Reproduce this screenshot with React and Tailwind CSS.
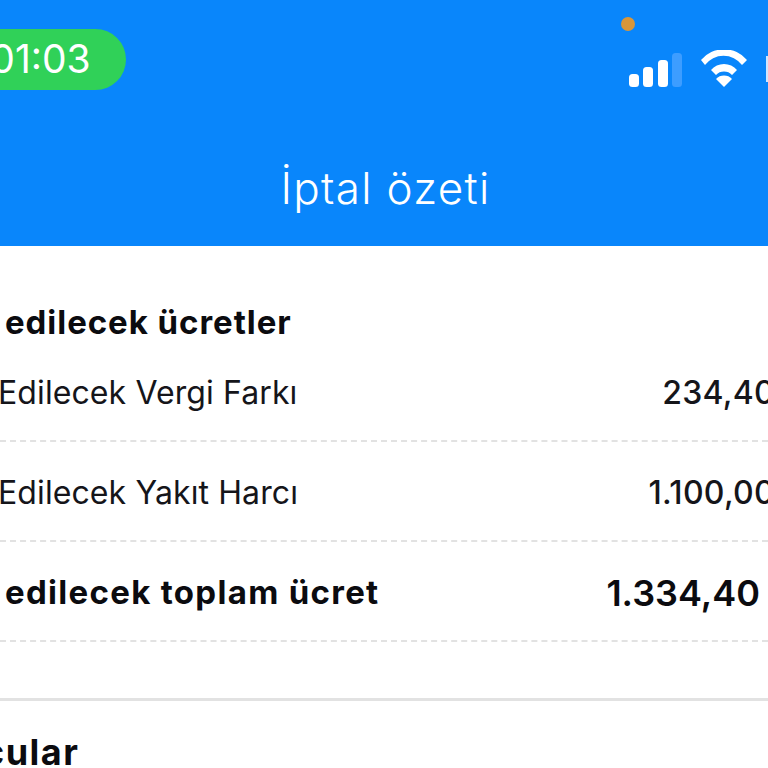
function StatusBar() {
  return (
    <div className="flex h-[124px] items-start justify-between">
      <div className="mt-[29px] -ml-[45px] flex h-[61px] w-[171px] items-center justify-center rounded-r-full bg-[#30d158] text-[39px] font-normal text-white font-['Inter',sans-serif]">
        01:03
      </div>
      <div className="relative h-[124px] w-[168px]">
        <div className="absolute top-[17px] left-[21px] h-[14px] w-[14px] rounded-full bg-[#d8963a]" />
        <svg className="absolute top-[50px] left-[29px]" width="126" height="40" viewBox="0 0 126 40" fill="#fff">
          <rect x="0" y="24" width="10" height="13" rx="3.5" />
          <rect x="14" y="17" width="10" height="20" rx="3.5" />
          <rect x="29" y="10" width="10" height="27" rx="3.5" />
          <rect x="43" y="3" width="10" height="34" rx="3.5" fill="#3d9dff" />
          <path d="M72 14 L76 19 A23 23 0 0 1 113 19 L118 14 A30 30 0 0 0 72 14 Z" transform="translate(0 -4)" />
          <path d="M82 20 A17 17 0 0 1 108 20 L103 25 A11 11 0 0 0 87 25 Z" />
          <path d="M95 37 L87 29 A11 11 0 0 1 103 29 Z" />
        </svg>
        <div className="absolute top-[56px] left-[166px] h-[26px] w-[4px] bg-[#cfe6ff]" />
      </div>
    </div>
  );
}

function Row({ label, value, bold }) {
  return (
    <div className="flex h-[100px] flex-col">
      <div className="flex h-[99px] items-center justify-between pt-[4px]">
        <span
          className={
            bold
              ? "ml-[5px] text-[33px] tracking-[1.3px] font-bold text-[#0b0b0f] font-['Inter',sans-serif]"
              : "-ml-[2px] text-[32px] tracking-[0.1px] font-normal text-[#15151a] font-['Inter',sans-serif]"
          }
        >
          {label}
        </span>
        {value}
      </div>
      <div className="border-t-2 border-dashed border-[#e2e2e2]" />
    </div>
  );
}

export default function App() {
  return (
    <div className="h-[768px] w-[768px] overflow-hidden bg-white">
      <header className="h-[246px] bg-[#0986fb]">
        <StatusBar />
        <h1 className="mt-[36px] pl-[3px] text-center text-[44px] leading-[56px] tracking-[1.3px] font-light text-white font-['Inter',sans-serif]">
          İptal özeti
        </h1>
      </header>

      <main className="pt-[55px]">
        <h2 className="ml-[5px] text-[33px] leading-[42px] tracking-[0.95px] font-bold text-[#0b0b0f] font-['Inter',sans-serif]">
          edilecek ücretler
        </h2>
        <div className="mt-[-1px]">
          <Row
            label="Edilecek Vergi Farkı"
            value={<span className="-mr-[7px] text-[32px] tracking-[0.3px] font-medium text-[#15151a] font-['Inter',sans-serif]">234,40</span>}
          />
          <Row
            label="Edilecek Yakıt Harcı"
            value={<span className="-mr-[7px] text-[32px] tracking-[0.3px] font-medium text-[#15151a] font-['Inter',sans-serif]">1.100,00</span>}
          />
          <Row
            bold
            label="edilecek toplam ücret"
            value={<span className="mr-[8px] text-[36px] font-semibold text-[#0b0b0f] font-['Inter',sans-serif]">1.334,40</span>}
          />
        </div>
        <div className="mt-[56px] border-t-[3px] border-[#e2e2e2]" />
        <p className="-ml-[17px] mt-[28px] text-[36px] leading-[46px] tracking-[1.5px] font-bold text-[#0b0b0f] font-['Inter',sans-serif]">
          cular
        </p>
      </main>
    </div>
  );
}
